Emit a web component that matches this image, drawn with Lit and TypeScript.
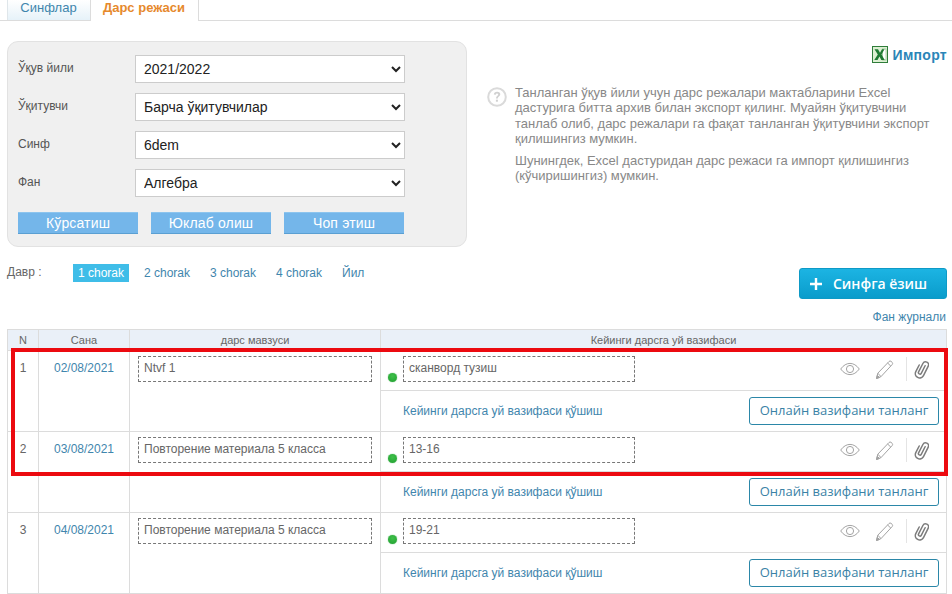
import { LitElement, html, css, svg } from "lit";
import { customElement } from "lit/decorators.js";

const eye = svg`<svg class="i-eye" width="20" height="14" viewBox="0 0 20 14" fill="none" stroke="#999" stroke-width="0.9"><path d="M0.7 7C3.5 3.2 6.6 1.4 10 1.4S16.500 3.2 19.300 7C16.500 10.800 13.400 12.600 10 12.600S3.500 10.800 0.700 7Z"/><circle cx="10" cy="7" r="3.600"/></svg>`;
const pencil = svg`<svg width="19" height="21" viewBox="0 0 19 21" fill="none" stroke="#a3a3a3" stroke-width="1"><path d="M1.500 19.500L2.800 14.200L14 2.500Q15 1.500 16 2.300L17.300 3.500Q18 4.500 17.200 5.500L6 17.600Z"/><path d="M2.800 14.200L6 17.600M12.600 4L15.900 7.200"/><path d="M1.500 19.500L2.300 16.300L4.500 18.500Z" fill="#a3a3a3"/></svg>`;
const clip = svg`<svg width="15" height="19" viewBox="0 0 15 19" fill="none" stroke="#7c7c7c" stroke-width="1.500" stroke-linecap="round"><path transform="rotate(27 7.500 9.500) translate(1.500 -0.500)" d="M7.500 5V13.500a1.500 1.500 0 0 1 -3 0V4a3 3 0 0 1 6 0V14.500a4.300 4.300 0 0 1 -8.600 0V7"/></svg>`;
const excel = svg`<svg width="16" height="17" viewBox="0 0 16 17"><rect x="0.500" y="0.500" width="15" height="16" fill="#dcefd2" stroke="#2f7d3a"/><rect x="10.500" y="3" width="3.500" height="11" fill="#fff" stroke="#8cbf8c" stroke-width="0.700"/><path d="M2.500 3.200H6L8 6.800L10 3.200H12.500L9.500 8.500L12.700 14H9.300L7.500 10.500L5.500 14H2.300L5.800 8.500Z" fill="#1f7a33"/></svg>`;
const help = svg`<svg width="20" height="20" viewBox="0 0 20 20"><circle cx="10" cy="10" r="8.800" fill="#fff" stroke="#dadada" stroke-width="2"/><path d="M6.800 7.600Q7 4.700 10.100 4.700Q13.300 4.800 13.300 7.300Q13.300 8.800 11.700 9.700Q10.800 10.300 10.800 11.600H9Q8.900 9.700 10.300 8.800Q11.300 8.100 11.200 7.400Q11.100 6.500 10 6.500Q8.900 6.500 8.700 7.800Z" fill="#d0d0d0"/><rect x="8.900" y="12.700" width="2" height="2" fill="#d0d0d0"/></svg>`;
const plus = svg`<svg class="plus" width="12" height="12" viewBox="0 0 12 12"><path d="M4.800 0H7.200V4.800H12V7.200H7.200V12H4.800V7.200H0V4.800H4.800Z" fill="#fff"/></svg>`;

const rows = [
  ["1", "02/08/2021", "Ntvf 1", "сканворд тузиш"],
  ["2", "03/08/2021", "Повторение материала 5 класса", "13-16"],
  ["3", "04/08/2021", "Повторение материала 5 класса", "19-21"],
];
const fields: [string, string][] = [
  ["Ўқув йили", "2021/2022"],
  ["Ўқитувчи", "Барча ўқитувчилар"],
  ["Синф", "6dem"],
  ["Фан", "Алгебра"],
];

@customElement("app-root")
export class AppRoot extends LitElement {
  static styles = css`
    :host { display: block; position: relative; width: 952px; height: 594px; overflow: hidden; background: #fff; font-family: "Liberation Sans", Arial, sans-serif; font-size: 12px; color: #666; }
    a { color: #3f86ad; text-decoration: none; }
    .tabs { display: flex; height: 20px; padding-left: 7px; border-bottom: 1px solid #dcdcdc; font-size: 13px; line-height: 15px; }
    .tab { box-sizing: border-box; height: 21px; text-align: center; }
    .tab.off { width: 83px; height: 20px; padding-right: 1px; color: #3f86ad; background: linear-gradient(#fff, #e6f2f9); border-left: 1px solid #dfe6ea; }
    .tab.on { width: 109px; padding-right: 1px; color: #e6892c; font-weight: bold; background: #fff; border: 1px solid #dcdcdc; border-width: 0 1px; }
    .top { display: flex; margin: 20px 5px 0 7px; height: 206px; }
    .panel { box-sizing: border-box; width: 460px; height: 206px; flex: none; background: #f0f0f0; border: 1px solid #e2e2e2; border-radius: 11px; padding: 13px 0 0 10px; }
    .field { display: flex; height: 28px; margin-bottom: 10px; }
    .field label { width: 117px; font-size: 12px; line-height: 26px; color: #555; }
    select { box-sizing: border-box; width: 270px; height: 28px; border: 1px solid #ccc; border-radius: 0; background-color: #fff; font-family: "Liberation Sans", Arial, sans-serif; font-size: 14px; color: #222; padding: 0 0 0 4px; outline: none; }
    .btns { display: flex; gap: 13px; margin-top: 15px; }
    .btn { box-sizing: border-box; width: 120px; height: 22px; background: #74b6ea; border: 0; border-top: 1px solid #8cc4ee; border-bottom: 1px solid #5a9fd2; color: #fff; font-size: 14px; line-height: 20px; text-align: center; letter-spacing: 0.150px; }
    .aside { flex: 1; padding-left: 20px; min-width: 0; }
    .import { display: flex; justify-content: flex-end; align-items: center; gap: 5px; height: 17px; margin-top: 5px; font-size: 14px; font-weight: bold; letter-spacing: 0.300px; color: #2a85b8; }
    .help { display: flex; gap: 8px; margin-top: 22px; }
    .help svg { flex: none; margin-top: 2px; }
    .help p { margin: 0 0 6px; font-size: 13px; line-height: 15.400px; color: #888; width: 432px; }
    .mid { display: flex; justify-content: space-between; margin: 17px 5px 0 7px; height: 65px; }
    .period { display: flex; align-items: flex-start; }
    .period .lbl { width: 66px; line-height: 16px; color: #666; }
    .chips { display: flex; gap: 10px; }
    .chip { display: block; width: 56px; box-sizing: border-box; height: 18px; padding-left: 5px; line-height: 18px; color: #3f86ad; }
    .chip.on { background: #3fbde8; color: #fff; }
    .right { display: flex; flex-direction: column; align-items: flex-end; }
    .enroll { box-sizing: border-box; display: flex; align-items: center; gap: 11px; width: 148px; height: 31px; margin-top: 4px; padding-left: 10px; border-radius: 3px; border: 1px solid #0e9ac6; background: linear-gradient(#1cb4e3, #0a9ccb); color: #fff; font-family: "Open Sans", sans-serif; font-size: 14px; font-weight: 600; }
    .enroll .plus { flex: none; }
    .right a { margin-top: 11px; margin-right: 1px; line-height: 15px; }
    .table { margin: 0 5px 0 7px; border: 1px solid #dcdcdc; border-width: 1px 0 0 1px; }
    .row { display: grid; grid-template-columns: 30px 91px 251px 1fr; border-right: 1px solid #dcdcdc; border-bottom: 1px solid #dcdcdc; }
    .row > div + div { border-left: 1px solid #dcdcdc; }
    .head { height: 20px; background: #eaf0f8; font-size: 11px; line-height: 21px; text-align: center; color: #666; }
    .body { height: 80px; }
    .num { text-align: center; padding-top: 9px; line-height: 16px; color: #666; }
    .date { text-align: center; padding-top: 9px; line-height: 16px; font-size: 12px; }
    .topic { padding: 5px 8px; }
    .dash { box-sizing: border-box; height: 26px; border: 1px dashed #777; padding-left: 5px; line-height: 22px; color: #666; font-size: 12px; white-space: nowrap; }
    .hw { display: flex; flex-direction: column; min-width: 0; }
    .hw-top { display: flex; height: 39px; border-bottom: 1px solid #dcdcdc; }
    .dot { width: 9px; height: 9px; margin: 22px 6px 0 7px; border-radius: 50%; background: radial-gradient(circle at 50% 35%, #3fc04a, #1f9e2f); box-shadow: 0 0 1px #1f9e2f; flex: none; }
    .hw-top .dash { width: 232px; margin-top: 5px; flex: none; }
    .icons { display: flex; align-items: center; margin-left: auto; height: 24px; margin-top: 6px; padding-right: 17px; }
    .icons .i-eye { margin-right: 15px; }
    .sep { width: 1px; height: 24px; background: #e4e4e4; margin: 0 7px 0 12px; }
    .hw-bot { display: flex; align-items: center; justify-content: space-between; flex: 1; padding: 0 7px 0 22px; }
    .online { box-sizing: border-box; width: 190px; height: 28px; border: 1px solid #2b87a8; border-radius: 3px; color: #3a82a6; font-family: "Open Sans", sans-serif; font-size: 13px; line-height: 25px; text-align: center; white-space: nowrap; }
    .mark { position: absolute; left: 11px; top: 348px; width: 937px; height: 128px; box-sizing: border-box; border: 4px solid #ec0a10; pointer-events: none; }
  `;

  render() {
    return html`
      <div class="tabs"><div class="tab off">Синфлар</div><div class="tab on">Дарс режаси</div></div>
      <div class="top">
        <div class="panel">
          ${fields.map(([l, v]) => html`<div class="field"><label>${l}</label><select><option>${v}</option></select></div>`)}
          <div class="btns"><div class="btn">Кўрсатиш</div><div class="btn">Юклаб олиш</div><div class="btn">Чоп этиш</div></div>
        </div>
        <div class="aside">
          <div class="import">${excel}<span>Импорт</span></div>
          <div class="help">${help}<div>
            <p>Танланган ўқув йили учун дарс режалари мактабларини Excel дастурига битта архив билан экспорт қилинг. Муайян ўқитувчини танлаб олиб, дарс режалари га фақат танланган ўқитувчини экспорт қилишингиз мумкин.</p>
            <p>Шунингдек, Excel дастуридан дарс режаси га импорт қилишингиз (кўчиришингиз) мумкин.</p>
          </div></div>
        </div>
      </div>
      <div class="mid">
        <div class="period"><div class="lbl">Давр :</div><div class="chips">
          <a class="chip on">1 chorak</a><a class="chip">2 chorak</a><a class="chip">3 chorak</a><a class="chip">4 chorak</a><a class="chip">Йил</a>
        </div></div>
        <div class="right">
          <div class="enroll">${plus}<span>Синфга ёзиш</span></div>
          <a>Фан журнали</a>
        </div>
      </div>
      <div class="table">
        <div class="row head"><div>N</div><div>Сана</div><div>дарс мавзуси</div><div>Кейинги дарсга уй вазифаси</div></div>
        ${rows.map((r) => html`
          <div class="row body">
            <div class="num">${r[0]}</div>
            <div class="date"><a>${r[1]}</a></div>
            <div class="topic"><div class="dash">${r[2]}</div></div>
            <div class="hw">
              <div class="hw-top"><span class="dot"></span><div class="dash">${r[3]}</div>
                <div class="icons">${eye}${pencil}<span class="sep"></span>${clip}</div></div>
              <div class="hw-bot"><a>Кейинги дарсга уй вазифаси қўшиш</a><div class="online">Онлайн вазифани танланг</div></div>
            </div>
          </div>`)}
      </div>
      <div class="mark"></div>
    `;
  }
}
